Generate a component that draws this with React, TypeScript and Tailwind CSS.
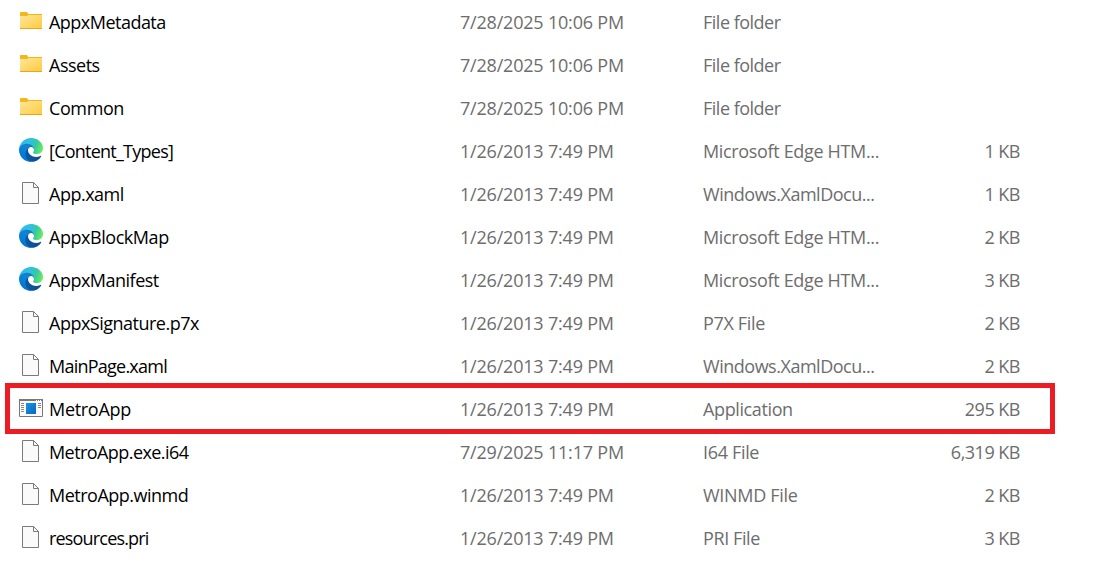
import React from "react";

type Kind = "folder" | "edge" | "file" | "app";
type Entry = { name: string; nameClass: string; kind: Kind; date: string; type: string; typeClass: string; size?: string };

const OLD = "1/26/2013 7:49 PM";
const NEW = "7/28/2025 10:06 PM";

const entries: Entry[] = [
  { name: "AppxMetadata", nameClass: "tracking-[-0.52px]", kind: "folder", date: NEW, type: "File folder", typeClass: "tracking-[-0.5px]" },
  { name: "Assets", nameClass: "tracking-[-0.5px]", kind: "folder", date: NEW, type: "File folder", typeClass: "tracking-[-0.5px]" },
  { name: "Common", nameClass: "tracking-[-0.4px]", kind: "folder", date: NEW, type: "File folder", typeClass: "tracking-[-0.5px]" },
  { name: "[Content_Types]", nameClass: "tracking-[-0.76px]", kind: "edge", date: OLD, type: "Microsoft Edge HTM...", typeClass: "tracking-[-0.34px]", size: "1 KB" },
  { name: "App.xaml", nameClass: "tracking-[-0.5px]", kind: "file", date: OLD, type: "Windows.XamlDocu...", typeClass: "tracking-[-0.48px]", size: "1 KB" },
  { name: "AppxBlockMap", nameClass: "tracking-[-0.45px]", kind: "edge", date: OLD, type: "Microsoft Edge HTM...", typeClass: "tracking-[-0.34px]", size: "2 KB" },
  { name: "AppxManifest", nameClass: "tracking-[-0.5px]", kind: "edge", date: OLD, type: "Microsoft Edge HTM...", typeClass: "tracking-[-0.34px]", size: "3 KB" },
  { name: "AppxSignature.p7x", nameClass: "tracking-[-0.5px]", kind: "file", date: OLD, type: "P7X File", typeClass: "tracking-[-0.33px]", size: "2 KB" },
  { name: "MainPage.xaml", nameClass: "tracking-[-0.76px]", kind: "file", date: OLD, type: "Windows.XamlDocu...", typeClass: "tracking-[-0.48px]", size: "2 KB" },
  { name: "MetroApp", nameClass: "tracking-[-0.3px]", kind: "app", date: OLD, type: "Application", typeClass: "tracking-[-0.38px]", size: "295 KB" },
  { name: "MetroApp.exe.i64", nameClass: "tracking-[-0.57px]", kind: "file", date: "7/29/2025 11:17 PM", type: "I64 File", typeClass: "tracking-[-0.33px]", size: "6,319 KB" },
  { name: "MetroApp.winmd", nameClass: "tracking-[-0.5px]", kind: "file", date: OLD, type: "WINMD File", typeClass: "tracking-[-0.3px]", size: "2 KB" },
  { name: "resources.pri", nameClass: "tracking-[-0.82px]", kind: "file", date: OLD, type: "PRI File", typeClass: "tracking-[-0.4px]", size: "3 KB" },
];

function Icon({ kind }: { kind: Kind }) {
  const id = React.useId();
  const a = id + "a", b = id + "b", c = id + "c";
  if (kind === "folder")
    return (
      <svg className="size-6" viewBox="0 0 24 24">
        <defs>
          <linearGradient id={a} x1="0" y1="0" x2="1" y2="1">
            <stop offset="0" stopColor="#ffe69b" />
            <stop offset="1" stopColor="#ffcb3c" />
          </linearGradient>
        </defs>
        <path d="M1 4a1 1 0 0 1 1-1h6l1.2 2H23v4H1z" fill="#f5b51c" />
        <path d="M1 7h7l1.5-1H23v14H1z" fill={`url(#${a})`} />
        <path d="M1 19h22v1H1z" fill="#eaa51c" />
      </svg>
    );
  if (kind === "edge")
    return (
      <svg className="size-6" viewBox="0 0 256 256">
        <defs>
          <linearGradient id={a} x1="63" y1="177" x2="242" y2="177" gradientUnits="userSpaceOnUse">
            <stop offset="0" stopColor="#0c59a4" />
            <stop offset="1" stopColor="#114a8b" />
          </linearGradient>
          <linearGradient id={b} x1="157" y1="100" x2="46" y2="221" gradientUnits="userSpaceOnUse">
            <stop offset="0" stopColor="#1377bd" />
            <stop offset=".3" stopColor="#1283d0" />
            <stop offset=".67" stopColor="#0680d7" />
            <stop offset="1" stopColor="#0078d4" />
          </linearGradient>
          <linearGradient id={c} x1="15" y1="60" x2="240" y2="130" gradientUnits="userSpaceOnUse">
            <stop offset="0" stopColor="#35b8f1" />
            <stop offset=".4" stopColor="#2fc1df" />
            <stop offset=".68" stopColor="#36c7a6" />
            <stop offset="1" stopColor="#66eb5e" />
          </linearGradient>
        </defs>
        <path fill={`url(#${a})`} d="M231 190.5c-3.4 1.8-6.9 3.4-10.5 4.7-11.5 4.3-23.6 6.5-35.9 6.5-47.3 0-88.5-32.5-88.5-74.3.1-11.4 6.4-21.9 16.4-27.3-42.8 1.8-53.8 46.4-53.8 72.5 0 73.9 68.1 81.4 82.8 81.4 7.9 0 19.8-2.3 27-4.6l1.3-.4c27.6-9.5 51-28.1 66.6-52.8 1.2-1.9.6-4.3-1.2-5.5-1.3-.8-2.9-.8-4.2-.2z" />
        <path fill={`url(#${b})`} d="M105.7 241.4c-8.9-5.5-16.6-12.8-22.7-21.3-26.3-36-18.4-86.5 17.6-112.8 3.8-2.7 7.7-5.2 11.9-7.2 3.1-1.5 8.4-4.1 15.5-4 10.1.1 19.6 4.9 25.7 13 4 5.4 6.3 11.9 6.4 18.7 0-.2 24.5-79.6-80-79.6-43.9 0-80 41.7-80 78.2-.2 19.3 4 38.5 12.1 56 27.6 58.8 94.8 87.6 156.4 67.1-21.1 6.6-44.1 3.7-62.9-8.1z" />
        <path fill={`url(#${c})`} d="M152.3 148.9c-.9 1-3.4 2.5-3.4 5.6 0 2.6 1.7 5.2 4.8 7.3 14.3 10 41.4 8.6 41.5 8.6 10.7 0 21.1-2.9 30.3-8.3 18.8-11 30.4-31.1 30.4-52.9.3-22.4-8-37.3-11.3-43.9C223.5 23.9 177.7 0 128 0 58 0 1 56.2 0 126.2c.5-36.5 36.8-66 80-66 3.5 0 23.5.3 42 10.1 16.3 8.6 24.9 18.9 30.8 29.2 6.2 10.7 7.3 24.1 7.3 29.5 0 5.3-2.7 13.3-7.8 19.9z" />
      </svg>
    );
  if (kind === "file")
    return (
      <svg className="size-6" viewBox="0 0 24 24" fill="none" stroke="#7c7a77">
        <path d="M3.5 1.5h11l5 5v16h-16z" fill="#fafafa" />
        <path d="M14.5 1.5v5h5" />
      </svg>
    );
  return (
    <svg className="size-6" viewBox="0 0 24 24">
      <defs>
        <linearGradient id={a} x1="0" y1="0" x2="1" y2="1">
          <stop offset="0" stopColor="#1a93e4" />
          <stop offset="1" stopColor="#0669bd" />
        </linearGradient>
      </defs>
      <path d="M.5 3.5h23v17H.5z" fill="#fafafa" stroke="#7a7876" />
      <path d="M0 3h24v2H0z" fill="#7a7876" />
      <path d="M17 4h1v1h-1zM19 4h1v1h-1zM21 4h1v1h-1z" fill="#fff" />
      <path d="M7 7h10v11H7z" fill={`url(#${a})`} />
      <path d="M2 7.5h3M2 9.5h3M2 11.5h3M2 13.5h3M2 15.5h3M19 7.5h3M19 9.5h3M19 11.5h3" stroke="#8a8886" />
    </svg>
  );
}

export default function App() {
  return (
    <main className="relative h-[570px] w-[1094px] overflow-hidden bg-white pt-px font-['Open_Sans','Noto_Sans',sans-serif] text-lg text-[#6d6d6d]">
      {entries.map((e) => (
        <div key={e.name} className="grid h-[43px] grid-cols-[30px_411px_243px_217px_100px] pl-[19px] leading-[42px] whitespace-pre">
          <span className="pt-2">
            <Icon kind={e.kind} />
          </span>
          <span className="text-black"><span className={e.nameClass}>{e.name}</span></span>
          <span className="tracking-[-0.2px]">{e.date}</span>
          <span><span className={e.typeClass}>{e.type}</span></span>
          <span className="text-right tracking-[-0.5px]">{e.size}</span>
        </div>
      ))}
      <div className="absolute top-[383px] left-[5px] h-[51px] w-[1050px] border-5 border-[#ed1c24]" />
    </main>
  );
}
